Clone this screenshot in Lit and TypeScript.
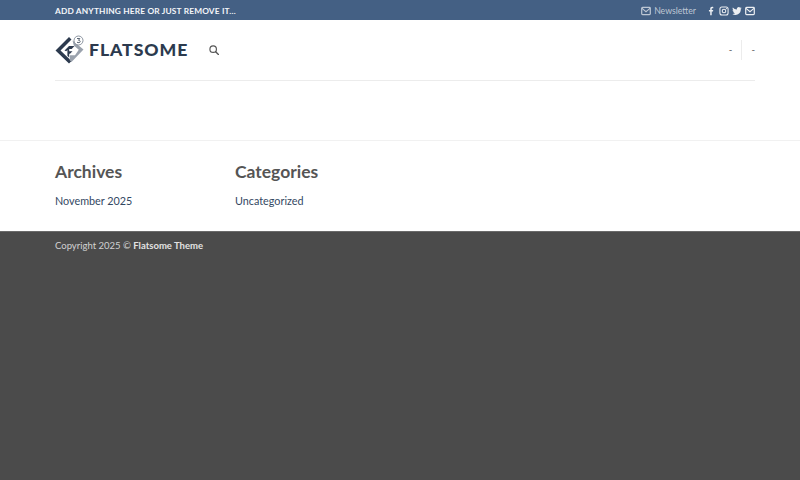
import { LitElement, html, css, svg } from "lit";
import { customElement } from "lit/decorators.js";

const mail = svg`<rect x="1" y="2" width="12" height="10" rx="1.200" fill="none" stroke="currentColor" stroke-width="1.700"/><path d="M1.500 3.400 7 8l5.500-4.600" fill="none" stroke="currentColor" stroke-width="1.500"/>`;

@customElement("app-root")
export class AppRoot extends LitElement {
  static styles = css`
    :host { display: block; width: 800px; height: 480px; background: #4b4b4b; font-family: Lato, sans-serif; overflow: hidden; }
    a { color: inherit; text-decoration: none; }
    .inner { width: 700px; margin-left: 55px; display: flex; align-items: center; }
    .top { height: 20px; background: #446084; color: #fff; }
    .top .inner { height: 20px; box-sizing: border-box; padding-top: 1px; justify-content: space-between; }
    .promo { font-size: 8.320px; font-weight: 700; letter-spacing: 0.170px; color: #f4f6f9; white-space: nowrap; }
    .social { display: flex; align-items: center; color: rgba(255,255,255,.65); font-size: 8.700px; }
    .social svg { display: block; width: 10px; height: 10px; }
    .news { display: flex; align-items: center; gap: 3px; margin-right: 10px; }
    .icons { display: flex; align-items: center; gap: 3px; color: rgba(255,255,255,.9); }
    .white { background: #fff; }
    .head { box-sizing: border-box; justify-content: space-between; border-bottom: 1px solid #ececec; height: 61px; }
    .left { display: flex; align-items: center; }
    .logo { width: 30px; height: 30px; display: block; margin-right: 4px; }
    .brand { font-size: 17.600px; font-weight: 900; letter-spacing: 0.950px; color: #2c3a4e; line-height: 1; white-space: nowrap; }
    .search { width: 10px; height: 10px; margin: 0 0 1px 21px; color: #555; display: block; }
    .right { display: flex; align-items: center; color: #555; font-size: 9.600px; height: 20px; }
    .right span:first-child { padding-right: 9px; border-right: 1px solid #ececec; height: 20px; line-height: 20px; }
    .right span:last-child { padding-left: 9px; line-height: 20px; }
    .gap { height: 59px; border-bottom: 1px solid #f1f1f1; }
    .widgets { height: 90px; }
    .cols { width: 700px; margin-left: 55px; display: flex; padding-top: 20px; }
    .col { width: 180px; }
    h3 { margin: 0; font-size: 17.500px; line-height: 21px; font-weight: 700; color: #555; }
    .col a { display: block; margin-top: 11px; font-size: 10.800px; line-height: 16px; color: #334862; }
    .foot { border-top: 1px solid #6a6a6a; color: rgba(255,255,255,.75); font-size: 9.500px; line-height: 14px; }
    .foot .inner { padding-top: 7px; }
    .foot b { font-weight: 700; color: #e2e2e2; }
  `;

  render() {
    return html`
      <div class="top"><div class="inner">
        <span class="promo">ADD ANYTHING HERE OR JUST REMOVE IT…</span>
        <div class="social">
          <a class="news" href="#"><svg viewBox="0 0 14 14">${mail}</svg>Newsletter</a>
          <div class="icons">
            <svg viewBox="0 0 14 14"><path fill="currentColor" d="M8 13V7.600h1.800l.3-2.100H8V4.200c0-.6.200-1 1-1h1.200V1.300C9.900 1.300 9.300 1.200 8.600 1.200 7 1.200 5.900 2.200 5.900 4v1.500H4.100v2.100h1.800V13z"/></svg>
            <svg viewBox="0 0 14 14"><rect x="1.300" y="1.300" width="11.400" height="11.400" rx="2.800" fill="none" stroke="currentColor" stroke-width="1.500"/><circle cx="7" cy="7" r="2.500" fill="none" stroke="currentColor" stroke-width="1.500"/><circle cx="10.400" cy="3.600" r=".8" fill="currentColor"/></svg>
            <svg viewBox="0 0 14 14"><path fill="currentColor" d="M13.600 3c-.5.200-1 .4-1.600.4.600-.3 1-.9 1.200-1.500-.5.300-1.100.5-1.700.7A2.700 2.700 0 0 0 6.800 5C4.600 4.900 2.600 3.800 1.200 2.200c-.7 1.200-.4 2.800.8 3.600-.4 0-.8-.1-1.200-.3 0 1.300.9 2.400 2.200 2.700-.4.100-.8.100-1.200 0 .3 1.100 1.300 1.800 2.500 1.900A5.400 5.400 0 0 1 .4 11.200 7.700 7.700 0 0 0 12.300 4.400c.5-.4 1-.9 1.300-1.400z"/></svg>
            <svg viewBox="0 0 14 14">${mail}</svg>
          </div>
        </div>
      </div></div>

      <div class="white">
        <div class="inner head">
          <div class="left">
            <svg class="logo" viewBox="0 0 30 30">
              <path fill="#2c3a4e" d="M14 2 .5 15.500 14 28.500l2.500-2.500-11-10.500L14 7l2.500-2.500z"/>
              <path fill="#9aa2ad" d="M17.500 5.500 28.500 14.500 16.500 27l-1.800-1.800.3-5 h5l3.800-5.500-5-4.200z"/>
              <path fill="#2c3a4e" d="M9.500 15.500 14 11h5.500l-2.800 3h-2.500v2.200h3.300l-2.500 2.600h-.8v3.700l-1.800-1.700v-5.800l-1.200 1.200z"/>
              <circle cx="23.500" cy="5.500" r="4.500" fill="#fff" stroke="#7d8794" stroke-width=".9"/>
              <path fill="none" stroke="#4a5666" stroke-width=".9" d="M22 3.500h2.800l-1.300 1.800c1.200 0 1.700.6 1.700 1.200 0 1.300-2 1.500-3.200.7"/>
            </svg>
            <span class="brand">FLATSOME</span>
            <svg class="search" viewBox="0 0 12 12"><circle cx="5" cy="5" r="3.900" fill="none" stroke="currentColor" stroke-width="1.400"/><path d="m8 8 3.300 3.300" stroke="currentColor" stroke-width="1.600" stroke-linecap="round"/></svg>
          </div>
          <div class="right"><span>-</span><span>-</span></div>
        </div>
        <div class="gap"></div>
        <div class="widgets">
          <div class="cols">
            <div class="col"><h3>Archives</h3><a href="#">November 2025</a></div>
            <div class="col"><h3>Categories</h3><a href="#">Uncategorized</a></div>
          </div>
        </div>
      </div>

      <div class="foot"><div class="inner">
        <span>Copyright 2025 © <b>Flatsome Theme</b></span>
      </div></div>
    `;
  }
}
